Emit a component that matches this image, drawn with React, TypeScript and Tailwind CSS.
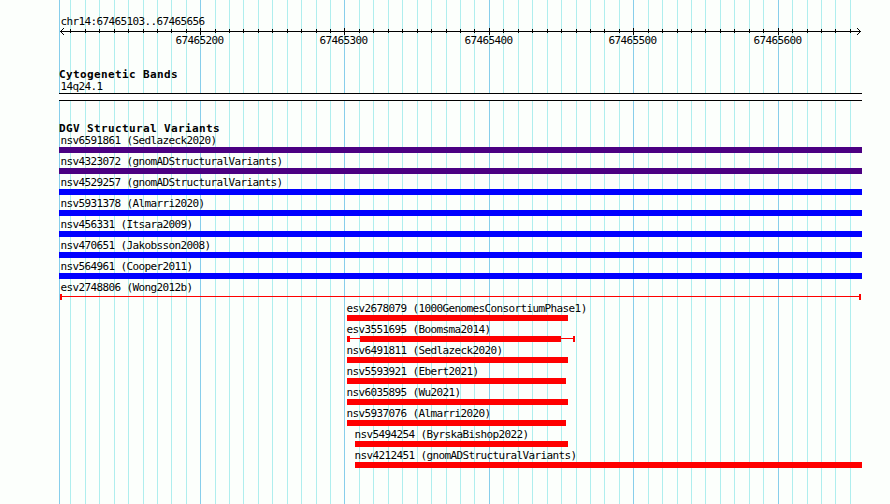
import React from 'react';

type Variant = {
  name: string;
  study: string;
  start: number;
  end: number;
  color: string;
  // inner solid block, when the breakpoints are uncertain
  core?: [number, number];
  caps?: [number, number];
  thin?: boolean;
};

const LEFT = 59;

const PURPLE = 'bg-[#4b0082]';
const BLUE = 'bg-[#0000ff]';
const RED = 'bg-[#ff0000]';

const variants: Variant[] = [
  { name: 'nsv6591861', study: 'Sedlazeck2020', start: 59, end: 862, color: PURPLE },
  { name: 'nsv4323072', study: 'gnomADStructuralVariants', start: 59, end: 862, color: PURPLE },
  { name: 'nsv4529257', study: 'gnomADStructuralVariants', start: 59, end: 862, color: BLUE },
  { name: 'nsv5931378', study: 'Almarri2020', start: 59, end: 862, color: BLUE },
  { name: 'nsv456331', study: 'Itsara2009', start: 59, end: 862, color: BLUE },
  { name: 'nsv470651', study: 'Jakobsson2008', start: 59, end: 862, color: BLUE },
  { name: 'nsv564961', study: 'Cooper2011', start: 59, end: 862, color: BLUE },
  { name: 'esv2748806', study: 'Wong2012b', start: 60, end: 861, color: RED, caps: [2, 2], thin: true },
  { name: 'esv2678079', study: '1000GenomesConsortiumPhase1', start: 347, end: 568, color: RED },
  { name: 'esv3551695', study: 'Boomsma2014', start: 347, end: 575, color: RED, caps: [3, 2], core: [360, 561], thin: true },
  { name: 'nsv6491811', study: 'Sedlazeck2020', start: 347, end: 568, color: RED },
  { name: 'nsv5593921', study: 'Ebert2021', start: 347, end: 566, color: RED },
  { name: 'nsv6035895', study: 'Wu2021', start: 347, end: 568, color: RED },
  { name: 'nsv5937076', study: 'Almarri2020', start: 347, end: 566, color: RED },
  { name: 'nsv5494254', study: 'ByrskaBishop2022', start: 355, end: 568, color: RED },
  { name: 'nsv4212451', study: 'gnomADStructuralVariants', start: 355, end: 862, color: RED },
];

const minorLines = [
  70, 85, 99, 114, 128, 143, 157, 171, 186, 215, 229, 243, 258, 272, 287, 301, 316, 330, 359, 373,
  388, 402, 417, 431, 446, 460, 474, 503, 518, 532, 547, 561, 576, 590, 604, 619, 648, 662, 677,
  691, 705, 720, 734, 749, 763, 792, 807, 821, 835, 850,
];

const majorLines = [
  { x: 200, label: '67465200' },
  { x: 344, label: '67465300' },
  { x: 489, label: '67465400' },
  { x: 633, label: '67465500' },
  { x: 778, label: '67465600' },
];

const Grid: React.FC = () => (
  <svg className="absolute inset-0" width="890" height="504" shapeRendering="crispEdges">
    {minorLines.map((x) => (
      <rect key={x} x={x} y={0} width={1} height={504} fill="#afeeee" />
    ))}
    {[59, ...majorLines.map((l) => l.x)].map((x) => (
      <rect key={x} x={x} y={0} width={1} height={504} fill="#87ceeb" />
    ))}
  </svg>
);

const Ruler: React.FC = () => (
  <svg className="block" width="890" height="68" shapeRendering="crispEdges">
    <g className="text-[11px] tracking-[-0.62px]" fill="#000">
      <text x={60.5} y={25}>chr14:67465103..67465656</text>
      {majorLines.map((l) => (
        <text key={l.x} x={l.x - 24.5} y={44}>{l.label}</text>
      ))}
    </g>
    <rect x={60} y={31} width={801} height={1} />
    {minorLines.map((x) => (
      <rect key={x} x={x} y={29} width={1} height={4} />
    ))}
    {majorLines.map((l) => (
      <rect key={l.x} x={l.x} y={28} width={1} height={7} />
    ))}
    {/* arrow heads */}
    {[1, 2, 3].map((d) => (
      <React.Fragment key={d}>
        <rect x={60 + d} y={31 - d} width={1} height={1} />
        <rect x={60 + d} y={31 + d} width={1} height={1} />
        <rect x={860 - d} y={31 - d} width={1} height={1} />
        <rect x={860 - d} y={31 + d} width={1} height={1} />
      </React.Fragment>
    ))}
  </svg>
);

const Glyph: React.FC<{ v: Variant }> = ({ v }) => {
  const width = v.end - v.start;
  if (!v.thin) {
    return <div className={`h-1.5 ${v.color}`} style={{ width, marginLeft: v.start - LEFT }} />;
  }
  const [capL, capR] = v.caps ?? [2, 2];
  return (
    <div className="flex h-1.5" style={{ width, marginLeft: v.start - LEFT }}>
      <div className={`h-full ${v.color}`} style={{ width: capL }} />
      {v.core ? (
        <>
          <div className={`mt-0.5 h-px ${v.color}`} style={{ width: v.core[0] - v.start - capL }} />
          <div className={`h-full ${v.color}`} style={{ width: v.core[1] - v.core[0] }} />
          <div className={`mt-0.5 h-px flex-1 ${v.color}`} />
        </>
      ) : (
        <div className={`mt-0.5 h-px flex-1 ${v.color}`} />
      )}
      <div className={`h-full ${v.color}`} style={{ width: capR }} />
    </div>
  );
};

const VariantRow: React.FC<{ v: Variant }> = ({ v }) => (
  <div className="h-[21px]">
    <div
      className="h-[15px] whitespace-pre pt-0.5 text-[11px] leading-[13px] tracking-[-0.62px]"
      style={{ paddingLeft: v.start < 100 ? 1.5 : v.start - LEFT - 0.5 }}
    >
      {v.name} ({v.study})
    </div>
    <Glyph v={v} />
  </div>
);

const App: React.FC = () => (
  <div className="relative h-[504px] w-[890px] overflow-hidden bg-[#fcfffc] font-['DejaVu_Sans_Mono',monospace] text-black">
    <Grid />
    <div className="relative">
      <Ruler />
      <div className="ml-[59px] w-[803px]">
        <h2 className="h-3 pt-px text-[11px] font-bold leading-3 tracking-[0.38px]">Cytogenetic Bands</h2>
        <div className="h-[13px] pl-[1.5px] text-[11px] leading-[13px] tracking-[-0.62px]">14q24.1</div>
        <div className="h-2 border-y border-black bg-white" />
        <h2 className="mt-[21px] h-2.5 pt-px text-[11px] font-bold leading-3 tracking-[0.38px]">
          DGV Structural Variants
        </h2>
        {variants.map((v) => (
          <VariantRow key={v.name} v={v} />
        ))}
      </div>
    </div>
  </div>
);

export default App;
